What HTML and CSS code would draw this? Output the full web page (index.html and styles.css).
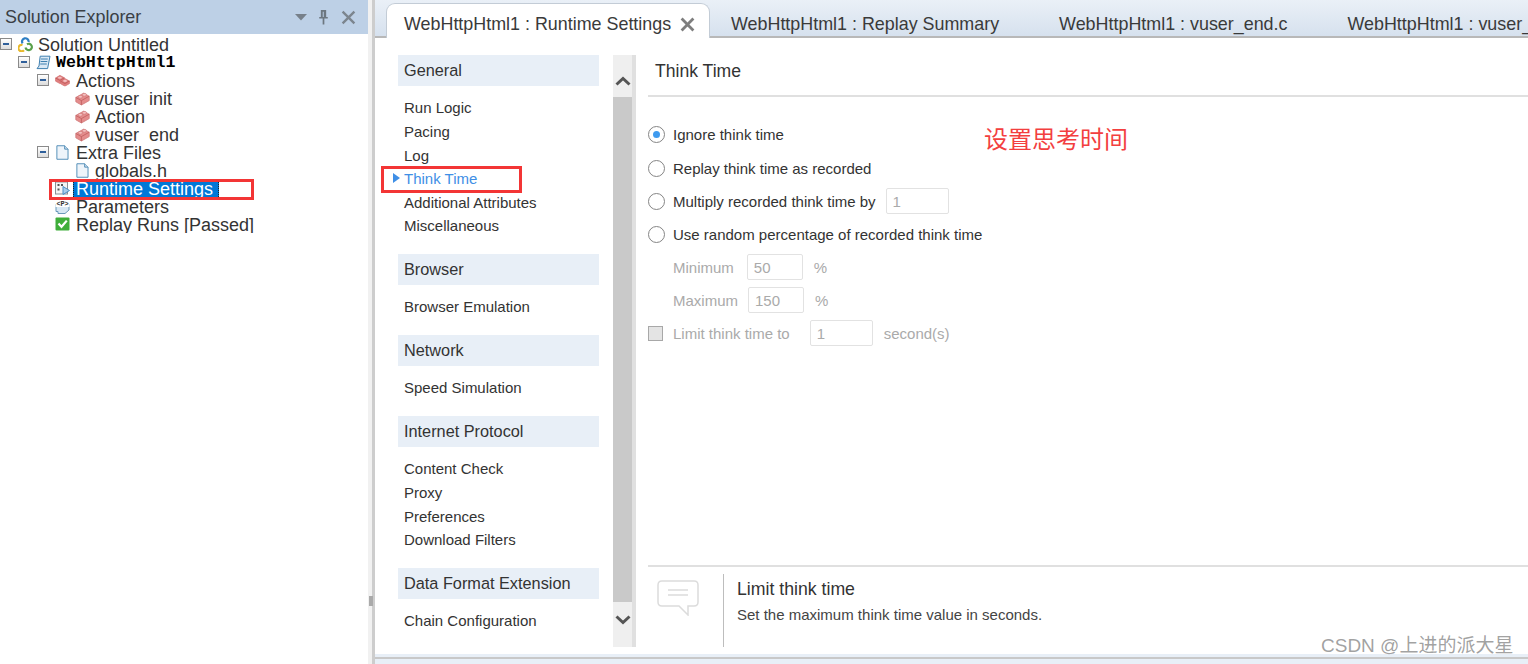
FILE: index.html
```html
<!DOCTYPE html>
<html lang="en">
<head>
<meta charset="utf-8">
<title>Runtime Settings</title>
<link rel="stylesheet" href="styles.css">
</head>
<body>
<svg class="defs" width="0" height="0" aria-hidden="true">
  <symbol id="brick" viewBox="0 0 15 15">
    <path d="M.8 6.4 8.6 2.2 14.2 5.2V9.6L6.4 14 .8 10.8Z" fill="#e48c8c" stroke="#d07878" stroke-width=".8"/>
    <path d="M.8 6.4 6.4 9.6 14.2 5.2M6.4 9.6V14" fill="none" stroke="#bf5d5d" stroke-width=".8"/>
    <ellipse cx="5.4" cy="5.8" rx="2.2" ry="1.4" fill="#f4c0c0" stroke="#cf7373" stroke-width=".6"/>
    <ellipse cx="9.4" cy="3.8" rx="2.2" ry="1.4" fill="#f4c0c0" stroke="#cf7373" stroke-width=".6"/>
  </symbol>
  <symbol id="bricks" viewBox="0 0 16 13">
    <path d="M.6 3.8 5.2 1 10 3.6V7L5.2 9.8.6 7.2Z" fill="#e07f7f" stroke="#cf6d6d" stroke-width=".7"/>
    <path d="M6 7.2 10.6 4.4 15.4 7V9.8L10.6 12.6 6 10Z" fill="#e07f7f" stroke="#cf6d6d" stroke-width=".7"/>
    <path d="M.6 3.8 5.2 6.4 10 3.6M6 7.2 10.6 9.8 15.4 7" fill="none" stroke="#b95555" stroke-width=".8"/>
    <ellipse cx="5.2" cy="3.5" rx="2" ry="1.1" fill="#f4c0c0"/>
    <ellipse cx="10.7" cy="6.9" rx="2" ry="1.1" fill="#f4c0c0"/>
  </symbol>
  <symbol id="doc" viewBox="0 0 15 16">
    <path d="M1.5 .8H9.8L13.4 4.4V15.2H1.5Z" fill="#eef4fa" stroke="#4d8bb5" stroke-width="1"/>
    <path d="M9.8 .8V4.4H13.4" fill="#cfe0ee" stroke="#4d8bb5" stroke-width="1"/>
  </symbol>
</svg>

<div class="app">
  <aside class="explorer">
    <header class="explorer-head">
      <span class="explorer-title">Solution Explorer</span>
      <span class="head-icons">
        <svg class="ico-menu" viewBox="0 0 12 7"><path d="M0 0H12L6 6.5Z" fill="#77808a"/></svg>
        <svg class="ico-pin" viewBox="0 0 10 15"><path d="M2.5 1H7.5V7.5H9V9H5.8V14.5H4.2V9H1V7.5H2.5Z M4.3 2.5V7.5H5.2V2.5Z" fill="#6d7780" fill-rule="evenodd"/></svg>
        <svg class="ico-close" viewBox="0 0 14 14"><path d="M1.5 1.5 12.5 12.5M12.5 1.5 1.5 12.5" stroke="#7c858e" stroke-width="2.2"/></svg>
      </span>
    </header>
    <ul class="tree">
      <li class="row l0"><i class="tog"></i>
        <svg class="ico" viewBox="0 0 15 15"><path d="M4.5 8A3.2 3.2 0 1 0 6 13.2" fill="none" stroke="#e8b92c" stroke-width="2.2"/><path d="M4.6 6.4A3.3 3.3 0 1 1 10.6 5" fill="none" stroke="#2e7ec4" stroke-width="2.2"/><path d="M7.5 10.5A3.2 3.2 0 1 0 9 7.2" fill="none" stroke="#5aa04a" stroke-width="2.2"/></svg>
        <span class="lbl">Solution Untitled</span></li>
      <li class="row l1"><i class="tog"></i>
        <svg class="ico" viewBox="0 0 15 15"><path d="M4.2 1.2H14L11.6 13.6H1L3 11Z" fill="#dbe9f5" stroke="#3f80b0"/><path d="M5 4H11.8M4.6 6.5H11.3M4.2 9H10.8" stroke="#3f80b0"/></svg>
        <span class="lbl project">WebHttpHtml1</span></li>
      <li class="row l2"><i class="tog"></i>
        <svg class="ico" viewBox="0 0 16 13"><use href="#bricks"/></svg>
        <span class="lbl">Actions</span></li>
      <li class="row l3"><svg class="ico" viewBox="0 0 15 15"><use href="#brick"/></svg><span class="lbl">vuser_init</span></li>
      <li class="row l3"><svg class="ico" viewBox="0 0 15 15"><use href="#brick"/></svg><span class="lbl">Action</span></li>
      <li class="row l3"><svg class="ico" viewBox="0 0 15 15"><use href="#brick"/></svg><span class="lbl">vuser_end</span></li>
      <li class="row l2"><i class="tog"></i>
        <svg class="ico" viewBox="0 0 15 16"><use href="#doc"/></svg>
        <span class="lbl">Extra Files</span></li>
      <li class="row l3"><svg class="ico" viewBox="0 0 15 16"><use href="#doc"/></svg><span class="lbl">globals.h</span></li>
      <li class="row l4">
        <svg class="ico" viewBox="0 0 15 15"><rect x=".5" y="1" width="12" height="12" fill="#f4f4f4" stroke="#8a8f94"/><rect x="2.5" y="3" width="2" height="2" fill="#555"/><rect x="6" y="3" width="2" height="2" fill="#555"/><rect x="2.5" y="7.5" width="2" height="2" fill="#555"/><path d="M8 5.5 14.5 9.5 8 13.5Z" fill="#a9cdea" stroke="#4a8fc7"/></svg>
        <span class="lbl selected">Runtime Settings</span></li>
      <li class="row l4">
        <svg class="ico" viewBox="0 0 15 15"><path d="M1 5V12.5H3V14.5H10L14 11V5Z" fill="#d7e7f4" stroke="#6b99ba"/><rect x=".5" y=".5" width="14" height="7.5" fill="#fff"/><text class="ico-text" x="7.5" y="6.8" text-anchor="middle">&lt;P&gt;</text></svg>
        <span class="lbl">Parameters</span></li>
      <li class="row l4">
        <svg class="ico" viewBox="0 0 15 15"><rect x=".5" y=".5" width="14" height="13" rx="1" fill="#3fae3a"/><path d="M3.5 6.5 6.5 9.8 11.8 3.6" fill="none" stroke="#fff" stroke-width="2.2"/></svg>
        <span class="lbl">Replay Runs [Passed]</span></li>
    </ul>
  </aside>

  <div class="splitter"><span class="grip"></span></div>

  <section class="workspace">
    <nav class="tabs">
      <div class="tab active">
        <span>WebHttpHtml1 : Runtime Settings</span>
        <svg class="tab-x" viewBox="0 0 14 14"><path d="M1.5 1.5 12.5 12.5M12.5 1.5 1.5 12.5" stroke="#7e7e7e" stroke-width="2.6"/></svg>
      </div>
      <div class="tab">WebHttpHtml1 : Replay Summary</div>
      <div class="tab">WebHttpHtml1 : vuser_end.c</div>
      <div class="tab">WebHttpHtml1 : vuser_init.c</div>
    </nav>

    <div class="content">
      <div class="nav">
        <h3 class="nav-head">General</h3>
        <ul class="nav-list">
          <li>Run Logic</li><li>Pacing</li><li>Log</li>
          <li class="current">Think Time</li>
          <li>Additional Attributes</li><li>Miscellaneous</li>
        </ul>
        <h3 class="nav-head">Browser</h3>
        <ul class="nav-list"><li>Browser Emulation</li></ul>
        <h3 class="nav-head">Network</h3>
        <ul class="nav-list"><li>Speed Simulation</li></ul>
        <h3 class="nav-head">Internet Protocol</h3>
        <ul class="nav-list"><li>Content Check</li><li>Proxy</li><li>Preferences</li><li>Download Filters</li></ul>
        <h3 class="nav-head">Data Format Extension</h3>
        <ul class="nav-list"><li>Chain Configuration</li></ul>
      </div>

      <div class="scroll">
        <div class="scroll-btn"><svg viewBox="0 0 16 10"><path d="M1.5 8.5 8 2.5 14.5 8.5" fill="none" stroke="#555" stroke-width="3"/></svg></div>
        <div class="scroll-thumb"></div>
        <div class="scroll-btn"><svg viewBox="0 0 16 10"><path d="M1.5 1.5 8 7.5 14.5 1.5" fill="none" stroke="#555" stroke-width="3"/></svg></div>
      </div>

      <main class="main">
        <h2 class="main-title">Think Time</h2>
        <div class="options">
          <div class="opt"><i class="radio on"></i><span>Ignore think time</span></div>
          <div class="opt"><i class="radio"></i><span>Replay think time as recorded</span></div>
          <div class="opt"><i class="radio"></i><span>Multiply recorded think time by</span><input class="num w63 ml10" value="1" disabled></div>
          <div class="opt"><i class="radio"></i><span>Use random percentage of recorded think time</span></div>
          <div class="opt sub off"><span>Minimum</span><input class="num w56 ml13" value="50" disabled><span class="unit">%</span></div>
          <div class="opt sub off"><span>Maximum</span><input class="num w56 ml10" value="150" disabled><span class="unit">%</span></div>
          <div class="opt off"><i class="check"></i><span>Limit think time to</span><input class="num w63 ml20" value="1" disabled><span class="unit">second(s)</span></div>
        </div>
        <footer class="help">
          <svg class="help-ico" viewBox="0 0 42 36"><path d="M5 1H37Q41 1 41 5V22Q41 26 37 26H31V35L22 26H5Q1 26 1 22V5Q1 1 5 1Z" fill="#fff" stroke="#dcdcdc" stroke-width="1.5"/><path d="M11 10H31M11 15H31" stroke="#dcdcdc" stroke-width="1.5"/></svg>
          <div class="help-text">
            <div class="help-title">Limit think time</div>
            <div class="help-desc">Set the maximum think time value in seconds.</div>
          </div>
        </footer>
      </main>
    </div>
    <div class="status"><span class="status-line"></span></div>
  </section>
</div>

<div class="mark mark-tree"></div>
<div class="mark mark-nav"></div>
<div class="note">设置思考时间</div>
<div class="watermark">CSDN @上进的派大星</div>
</body>
</html>
```
FILE: styles.css
```css
* { box-sizing: border-box; }
html, body { margin: 0; height: 100%; overflow: hidden; background: #fff; }
body { font-family: "Liberation Sans", "Noto Sans CJK SC", sans-serif; color: #333; position: relative; }
.defs { position: absolute; }
ul { list-style: none; margin: 0; padding: 0; }
h2, h3 { margin: 0; font-weight: 400; }

.app { display: flex; height: 664px; }

/* Solution explorer */
.explorer { width: 368px; flex: none; }
.explorer-head { height: 34px; background: #bdd0e6; display: flex; align-items: center; justify-content: space-between; padding: 0 12px 0 5px; }
.explorer-title { font-size: 17.9px; color: #3a3f45; }
.head-icons { display: flex; align-items: center; gap: 11px; }
.ico-menu { width: 12px; height: 7px; }
.ico-pin { width: 11px; height: 16px; }
.ico-close { width: 15px; height: 15px; margin-left: 1px; }

.tree { padding-top: 1px; }
.row { height: 18px; display: flex; align-items: center; overflow: hidden; font-size: 18px; color: #333; white-space: nowrap; }
.l0 { padding-left: 0; }
.l1 { padding-left: 18px; }
.l2 { padding-left: 37px; }
.l3 { padding-left: 75px; }
.l4 { padding-left: 55px; }
.tog { width: 12px; height: 12px; margin-right: 6px; flex: none; border: 1px solid #8a8a8a; background: linear-gradient(#fff, #dcdcdc); position: relative; }
.tog::after { content: ""; position: absolute; left: 2px; right: 2px; top: 4px; height: 2px; background: #2f5f9a; }
.ico { width: 15px; height: 15px; flex: none; margin-right: 5px; }
.l2 .ico, .l4 .ico { margin-right: 6px; }
.ico-text { font: 700 6.8px "Liberation Mono", monospace; fill: #333; }
.lbl { line-height: 20px; align-self: flex-start; }
.project { font: 700 16.6px/20px "Liberation Mono", monospace; color: #000; }
.selected { background: #0078d7; color: #fff; margin-left: -3px; padding: 0 4px 0 3px; outline: 1px dotted #222; outline-offset: -1px; width: 146px; }

/* Splitter */
.splitter { width: 4px; flex: none; background: #f1f1f1; position: relative; }
.grip { position: absolute; left: 1px; top: 596px; width: 4px; height: 10px; background: #aaa; }

/* Workspace */
.workspace { flex: 1; min-width: 0; display: flex; flex-direction: column; border-left: 3px solid #cdcdcd; overflow: hidden; }
.tabs { height: 38px; flex: none; display: flex; align-items: flex-end; padding-left: 11px; background: linear-gradient(#eaf0f7, #d6e1ee); border-bottom: 2px solid #b8b8b8; white-space: nowrap; font-size: 17.9px; color: #3a3a3a; }
.tab { height: 36px; padding: 0 39px 0 21px; line-height: 48px; flex: none; }
.tab.active { height: 35px; margin: 0 0 -2px; width: 324px; padding: 6px 0 0 17px; display: flex; align-items: center; gap: 9px; background: #fff; border: 1px solid #c3ccd6; border-bottom: 0; border-radius: 9px 9px 0 0; line-height: normal; }
.tab-x { width: 15px; height: 15px; }

.content { flex: 1; min-height: 0; display: flex; padding: 17px 0 7px 23px; }
.nav { width: 201px; flex: none; margin-right: 14px; }
.nav-head { height: 31px; line-height: 31px; padding-left: 6px; background: #e8eff7; font-size: 16.3px; color: #333; }
.nav-list { padding: 10.4px 0 16px 6px; font-size: 15px; }
.nav-list li { height: 23.6px; line-height: 23.6px; position: relative; }
.nav-list .current { color: #3f8fe6; }
.current::before { content: ""; position: absolute; left: -11px; top: 6px; border-left: 7px solid #3f8fe6; border-top: 5.5px solid transparent; border-bottom: 5.5px solid transparent; }

.scroll { width: 23px; flex: none; background: #efefef; border-right: 4px solid #e0e0e0; display: flex; flex-direction: column; }
.scroll-btn { height: 42px; display: flex; align-items: center; justify-content: center; padding-top: 10px; }
.scroll-btn:last-child { height: 45px; padding-top: 0; padding-bottom: 9px; }
.scroll-btn svg { width: 16px; height: 10px; }
.scroll-thumb { flex: 1; background: #c9c9c9; }

.main { flex: 1; min-width: 0; margin-left: 12px; display: flex; flex-direction: column; }
.main-title { height: 42px; line-height: 32px; padding-left: 7px; font-size: 17.6px; color: #333; border-bottom: 2px solid #e0e0e0; flex: none; }
.options { padding-top: 20.8px; font-size: 15px; }
.opt { height: 33px; display: flex; align-items: center; white-space: nowrap; }
.opt:first-child { height: 34px; }
.off { color: #aaa; }
.sub { padding-left: 25px; }
.radio { width: 17px; height: 17px; margin-right: 8px; flex: none; border-radius: 50%; border: 1.5px solid #858585; background: #fff; position: relative; }
.radio.on::after { content: ""; position: absolute; left: 3.5px; top: 3.5px; width: 7px; height: 7px; border-radius: 50%; background: #3f9bef; }
.check { width: 15px; height: 15px; margin-right: 10px; flex: none; border: 1.5px solid #a8a8a8; background: #e4e4e4; }
.num { height: 26px; padding: 0 0 0 6px; border: 1px solid #e2e2e2; border-radius: 2px; background: #fff; font: 15px "Liberation Sans", sans-serif; color: #aaa; }
.w63 { width: 63px; }
.w56 { width: 56px; }
.ml10 { margin-left: 10px; }
.ml13 { margin-left: 13px; }
.ml20 { margin-left: 20px; }
.unit { margin-left: 11px; }

.help { margin-top: auto; height: 82px; flex: none; border-top: 2px solid #e0e0e0; display: flex; padding: 7px 0 0 9px; }
.help-ico { width: 42px; height: 36px; margin: 6px 24px 0 0; flex: none; }
.help-text { border-left: 1px solid #bdbdbd; padding-left: 13px; flex: 1; }
.help-title { font-size: 17.7px; line-height: 19px; margin-top: 6px; color: #333; }
.help-desc { font-size: 15px; line-height: 18px; margin-top: 7px; color: #444; }

.status { height: 10px; flex: none; background: #e8eff7; padding-top: 3px; }
.status-line { display: block; height: 2px; background: #c8c8c8; }

/* Annotations drawn over the screenshot */
.mark { position: absolute; border: 3px solid #f33535; }
.mark-tree { left: 49px; top: 179px; width: 205px; height: 21px; }
.mark-nav { left: 381px; top: 166px; width: 141px; height: 27px; }
.note { position: absolute; left: 984px; top: 126px; font-size: 24px; line-height: 28px; color: #f33f3f; }
.watermark { position: absolute; left: 1321px; top: 634px; font-size: 19px; line-height: 24px; color: rgba(120, 120, 120, .7); white-space: nowrap; }
```
